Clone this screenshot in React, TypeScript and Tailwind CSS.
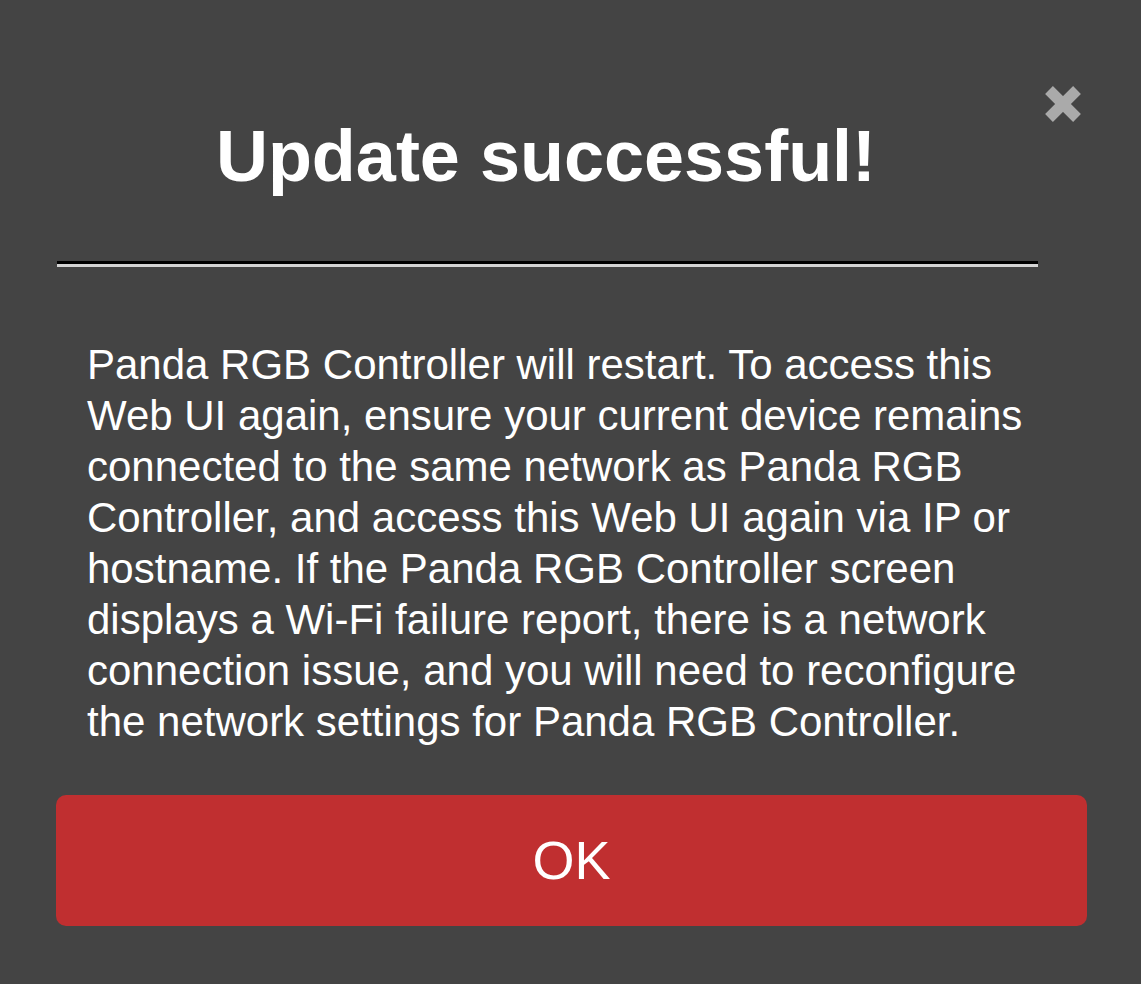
export default function App() {
  return (
    <div
      className="min-h-[984px] w-full bg-[#444444] pl-[56px] pr-[54px] pt-[84px] text-white"
      style={{ fontFamily: '"Liberation Sans", Arial, sans-serif' }}
    >
      <div className="flex items-start">
        <h1 className="mt-[31px] flex-1 text-center text-[72px] font-bold leading-[83px]">
          Update successful!
        </h1>
        <button className="ml-[7px] mr-[4px] h-[40px] w-[40px]" aria-label="Close">
          <svg viewBox="0 0 40 40" className="h-[40px] w-[40px]">
            <line x1="6" y1="6" x2="34" y2="34" stroke="#aaaaaa" strokeWidth="11" />
            <line x1="34" y1="6" x2="6" y2="34" stroke="#aaaaaa" strokeWidth="11" />
          </svg>
        </button>
      </div>

      <hr className="ml-[1px] mt-[63px] w-[981px] border-0 border-t-[3px] border-b-[3px] border-t-black border-b-[#d4d4d4]" />

      <p className="mt-[72px] px-[31px] text-[42px] leading-[51px]">
        Panda RGB Controller will restart. To access this Web UI again, ensure your current
        device remains connected to the same network as Panda RGB Controller, and access this
        Web UI again via IP or hostname. If the Panda RGB Controller screen displays a Wi-Fi
        failure report, there is a network connection issue, and you will need to reconfigure
        the network settings for Panda RGB Controller.
      </p>

      <button className="mt-[48px] flex h-[131px] w-full items-center justify-center rounded-[10px] bg-[#c02f30] text-[54px]">
        OK
      </button>
    </div>
  );
}
